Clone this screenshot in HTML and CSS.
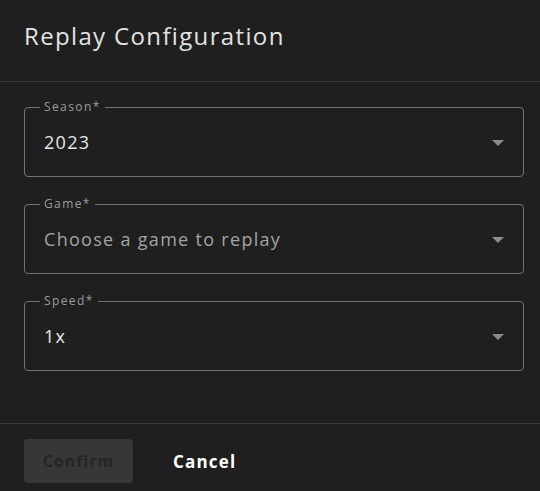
FILE: index.html
```html
<!DOCTYPE html>
<html lang="en">
<head>
<meta charset="utf-8">
<title>Replay Configuration</title>
<link rel="stylesheet" href="styles.css">
</head>
<body>
<div class="dialog">
  <header class="dialog-header">
    <h1 class="dialog-title">Replay Configuration</h1>
  </header>
  <main class="dialog-content">
    <div class="field">
      <span class="field-label">Season*</span>
      <span class="field-value">2023</span>
      <svg class="arrow" width="12" height="6" viewBox="0 0 12 6"><path d="M0 0h12L6 6z" fill="currentColor"/></svg>
    </div>
    <div class="field">
      <span class="field-label">Game*</span>
      <span class="field-value placeholder">Choose a game to replay</span>
      <svg class="arrow" width="12" height="6" viewBox="0 0 12 6"><path d="M0 0h12L6 6z" fill="currentColor"/></svg>
    </div>
    <div class="field">
      <span class="field-label">Speed*</span>
      <span class="field-value">1x</span>
      <svg class="arrow" width="12" height="6" viewBox="0 0 12 6"><path d="M0 0h12L6 6z" fill="currentColor"/></svg>
    </div>
  </main>
  <footer class="dialog-actions">
    <button class="btn btn-confirm" disabled>Confirm</button>
    <button class="btn btn-cancel">Cancel</button>
  </footer>
</div>
</body>
</html>
```
FILE: styles.css
```css
* { box-sizing: border-box; }
html, body { margin: 0; padding: 0; }
body {
  background: #1f1f1f;
  font-family: "Open Sans", "DejaVu Sans", sans-serif;
  color: #e4e4e4;
  width: 540px;
  height: 491px;
  overflow: hidden;
}
.dialog { display: flex; flex-direction: column; }
.dialog-header {
  height: 82px;
  border-bottom: 1px solid #3a3a3a;
  padding: 20px 24px 0;
}
.dialog-title {
  margin: 0;
  font-size: 24px;
  font-weight: 400;
  line-height: 32px;
  color: #e2e2e2;
  letter-spacing: 1.35px;
}
.dialog-content {
  padding: 25px 16px 0 24px;
  display: flex;
  flex-direction: column;
  gap: 27px;
  height: 342px;
  border-bottom: 1px solid #3a3a3a;
}
.field {
  position: relative;
  height: 70px;
  border: 1px solid #727272;
  border-radius: 4px;
  display: flex;
  align-items: center;
  padding: 0 19px 0 19px;
}
.field-label {
  position: absolute;
  top: -9px;
  left: 15px;
  padding: 0 4px;
  background: #1f1f1f;
  font-size: 12px;
  line-height: 16px;
  color: #9b9b9b;
  letter-spacing: 1.4px;
}
.field-value {
  flex: 1;
  font-size: 18px;
  color: #e6e6e6;
  letter-spacing: 1.3px;
}
.field-value.placeholder { color: #a3a3a3; }
.arrow { color: #8c8c8c; margin-top: 1px; }
.dialog-actions {
  display: flex;
  align-items: center;
  gap: 40px;
  padding: 15px 24px 0;
}
.btn {
  font-family: inherit;
  font-size: 16px;
  font-weight: 700;
  border: none;
  background: none;
  cursor: pointer;
  letter-spacing: 1px;
}
.btn-confirm {
  width: 109px;
  height: 44px;
  border-radius: 4px;
  background: #373737;
  color: #252525;
}
.btn-cancel {
  color: #ffffff;
  font-size: 17px;
  padding: 0;
  letter-spacing: 1.2px;
}
```
